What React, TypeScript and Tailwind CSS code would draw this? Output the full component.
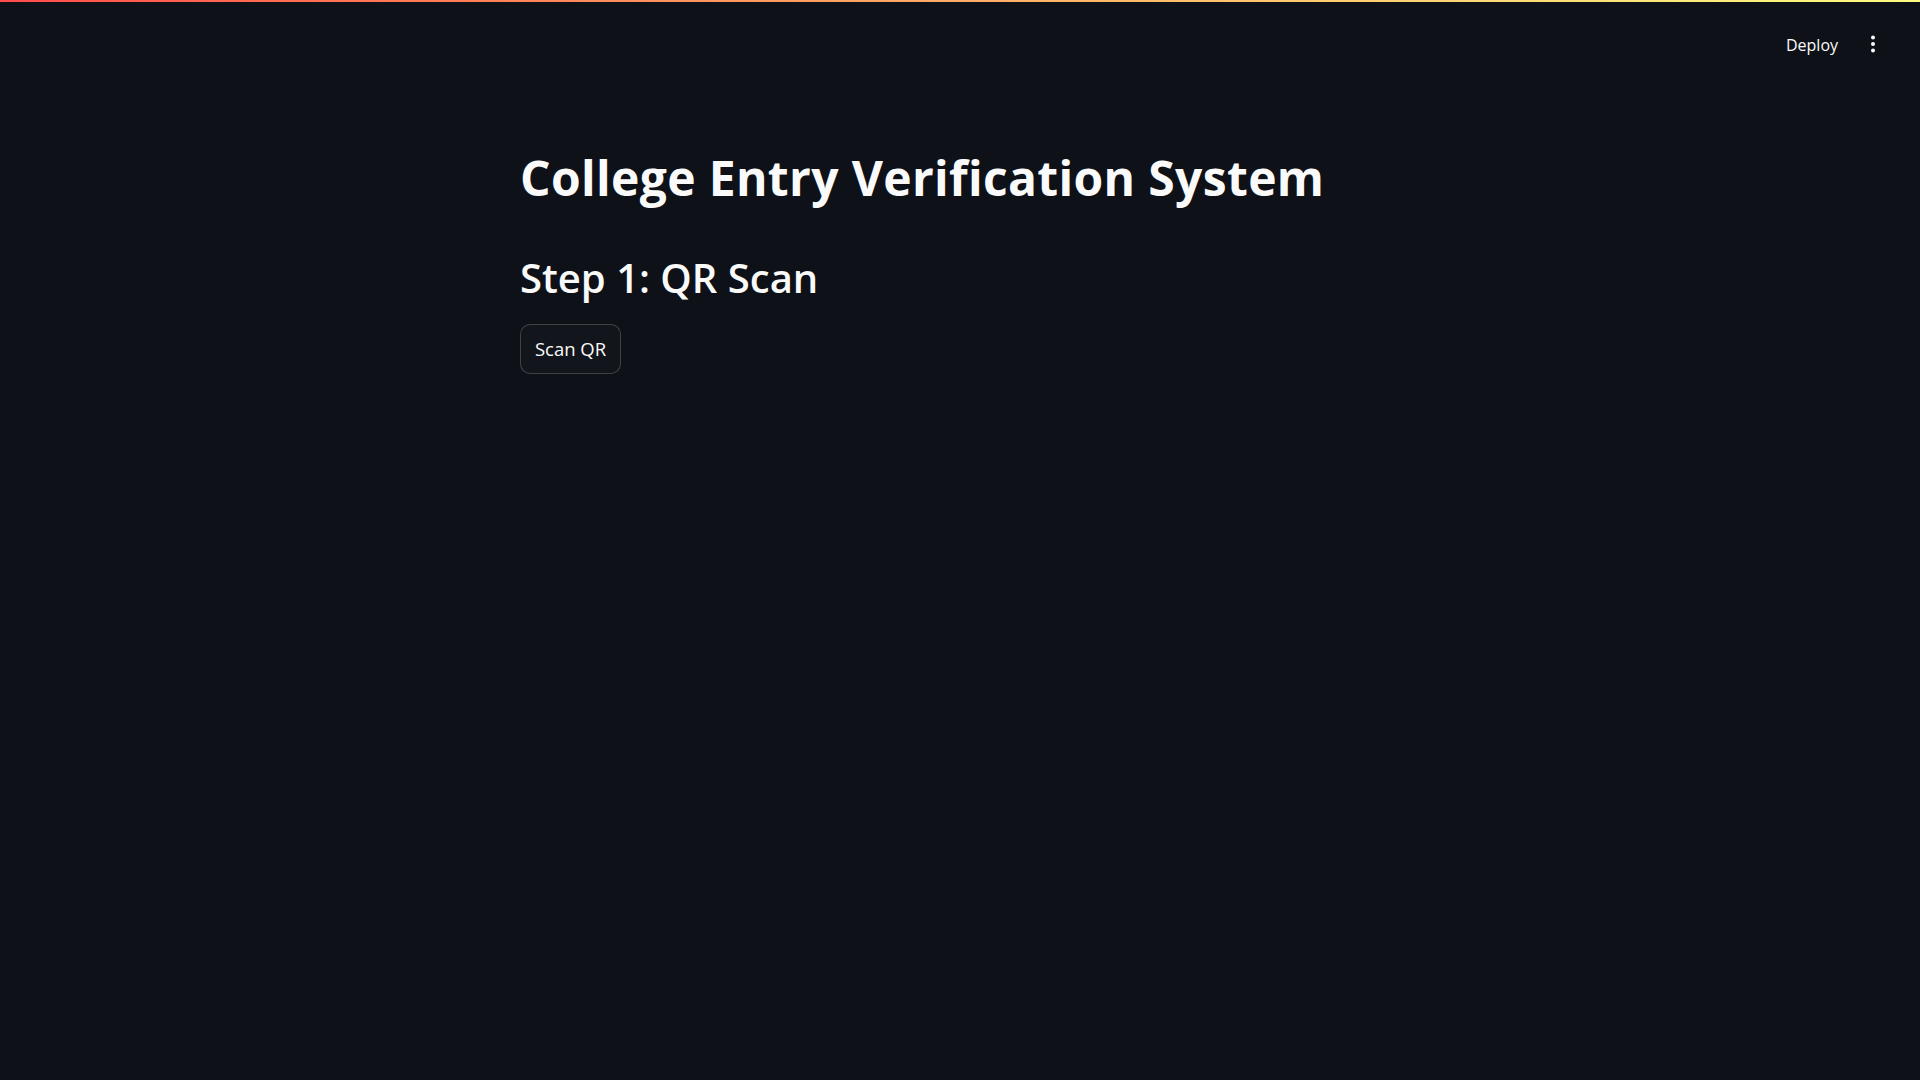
import React from "react";

export default function App() {
  const font = { fontFamily: "'Open Sans', 'Noto Sans', sans-serif" };
  return (
    <div className="w-full h-[1080px] bg-[#0e1117] text-[#fafafa] overflow-hidden" style={font}>
      <div className="h-[2px] w-full bg-gradient-to-r from-[#ff4b4b] to-[#fffd80]" />
      <header className="h-[86px] flex items-center justify-end pr-[37px]">
        <button className="w-[70px] h-[36px] flex items-center justify-center text-[16px] leading-[20px] text-[#fafafa]">
          Deploy
        </button>
        <div className="ml-[16px] w-[20px] h-[20px] flex items-center justify-center">
          <svg width="20" height="20" viewBox="0 0 20 20" fill="#fafafa">
            <circle cx="10" cy="2.5" r="2" />
            <circle cx="10" cy="9" r="2" />
            <circle cx="10" cy="15.5" r="2" />
          </svg>
        </div>
      </header>
      <main className="max-w-[920px] mx-auto px-[20px] pt-[61px]">
        <h1 className="text-[48px] leading-[58px] font-bold tracking-[0.35px]">
          College Entry Verification System
        </h1>
        <h2 className="mt-[47px] text-[40px] leading-[48px] font-semibold">Step 1: QR Scan</h2>
        <button className="mt-[22px] w-[101px] h-[50px] rounded-[10px] border border-[rgba(250,250,250,0.2)] bg-[#12151c] text-[18.5px] leading-[24px] flex items-center justify-center">
          Scan QR
        </button>
      </main>
    </div>
  );
}
